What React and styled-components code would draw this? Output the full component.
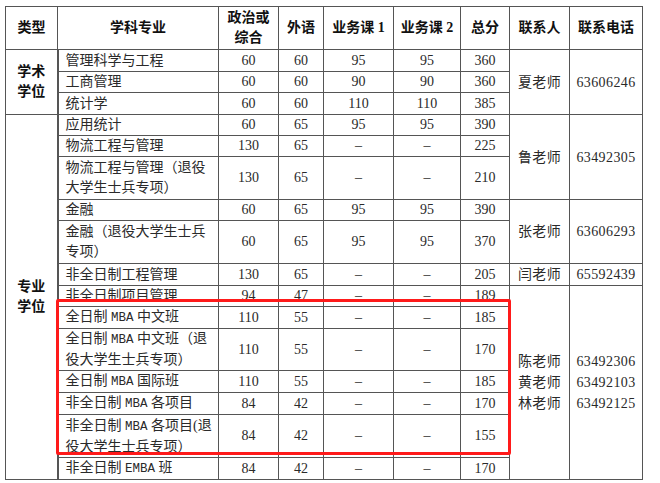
import styled, { createGlobalStyle } from "styled-components";

const GlobalStyle = createGlobalStyle`
  html, body {
    margin: 0;
    padding: 0;
    background: #ffffff;
  }
`;

const Page = styled.div`
  padding: 6px 0 0 5px;
  width: 660px;
  height: 483px;
  box-sizing: border-box;
`;

const Frame = styled.div`
  position: relative;
  width: 637px;
`;

const Table = styled.table`
  width: 637px;
  table-layout: fixed;
  border-collapse: collapse;
  font-family: "Liberation Serif", "Noto Sans CJK SC", serif;
  font-size: 14px;
  color: #2a2a2a;
`;

const HeadCell = styled.th`
  height: 42px;
  padding: 0;
  border: 1px solid #555;
  font-family: "Liberation Serif", "Noto Sans CJK SC", sans-serif;
  font-weight: 700;
  font-size: 14px;
  line-height: 20px;
  color: #111;
  text-align: center;
  vertical-align: middle;
  white-space: nowrap;
`;

const TypeCell = styled.td`
  padding: 0;
  border: 1px solid #555;
  border-right-width: 2px;
  font-family: "Liberation Serif", "Noto Sans CJK SC", sans-serif;
  font-weight: 700;
  line-height: 20px;
  color: #111;
  text-align: center;
  vertical-align: middle;
`;

const NameCell = styled.td`
  padding: 0 0 0 7px;
  border: 1px solid #555;
  line-height: 20px;
  text-align: left;
  vertical-align: middle;
  white-space: nowrap;
  overflow: hidden;
`;

const NumCell = styled.td`
  padding: 0;
  border: 1px solid #555;
  line-height: 20px;
  text-align: center;
  vertical-align: middle;
`;

const ContactCell = styled.td`
  padding: 0;
  border: 1px solid #555;
  line-height: 21px;
  letter-spacing: 0.4px;
  text-align: center;
  vertical-align: middle;
  white-space: nowrap;
`;

const Latin = styled.span`
  font-family: "Liberation Mono", monospace;
  font-size: 12.5px;
`;

const Highlight = styled.div`
  position: absolute;
  left: 51px;
  top: 293px;
  width: 455px;
  height: 156px;
  box-sizing: border-box;
  border: 3px solid #ff1a1a;
  border-radius: 2px;
  pointer-events: none;
`;

const colWidths = [52, 161, 60, 45, 70, 67, 49, 60, 73];

const headers = ["类型", "学科专业", "政治或\n综合", "外语", "业务课 1", "业务课 2", "总分", "联系人", "联系电话"];

const D = "–";

const rows = [
  { h: 22, name: "管理科学与工程", v: [60, 60, 95, 95, 360] },
  { h: 21, name: "工商管理", v: [60, 60, 90, 90, 360] },
  { h: 22, name: "统计学", v: [60, 60, 110, 110, 385] },
  { h: 21, name: "应用统计", v: [60, 65, 95, 95, 390] },
  { h: 21, name: "物流工程与管理", v: [130, 65, D, D, 225] },
  { h: 43, name: "物流工程与管理（退役\n大学生士兵专项）", v: [130, 65, D, D, 210] },
  { h: 21, name: "金融", v: [60, 65, 95, 95, 390] },
  { h: 43, name: "金融（退役大学生士兵\n专项）", v: [60, 65, 95, 95, 370] },
  { h: 21, name: "非全日制工程管理", v: [130, 65, D, D, 205] },
  { h: 21, name: "非全日制项目管理", v: [94, 47, D, D, 189] },
  { h: 22, name: "全日制 MBA 中文班", v: [110, 55, D, D, 185] },
  { h: 42, name: "全日制 MBA 中文班（退\n役大学生士兵专项）", v: [110, 55, D, D, 170] },
  { h: 22, name: "全日制 MBA 国际班", v: [110, 55, D, D, 185] },
  { h: 21, name: "非全日制 MBA 各项目", v: [84, 42, D, D, 170] },
  { h: 43, name: "非全日制 MBA 各项目(退\n役大学生士兵专项）", v: [84, 42, D, D, 155] },
  { h: 20, name: "非全日制 EMBA 班", v: [84, 42, D, D, 170] },
];

const types = {
  0: { span: 3, label: "学术\n学位" },
  3: { span: 13, label: "专业\n学位" },
};

const contacts = {
  0: { span: 3, name: "夏老师", phone: "63606246" },
  3: { span: 3, name: "鲁老师", phone: "63492305" },
  6: { span: 2, name: "张老师", phone: "63606293" },
  8: { span: 1, name: "闫老师", phone: "65592439" },
  9: { span: 7, name: "陈老师\n黄老师\n林老师", phone: "63492306\n63492103\n63492125" },
};

// split latin runs so "MBA" gets the narrow half-width look
const withLatin = (line) =>
  line.split(/([A-Za-z]+)/).map((part, k) =>
    /^[A-Za-z]+$/.test(part) ? <Latin key={k}>{part}</Latin> : part
  );

const Lines = ({ text }) =>
  text.split("\n").map((line, i) => (
    <span key={i}>
      {i > 0 && <br />}
      {withLatin(line)}
    </span>
  ));

export default function App() {
  return (
    <Page>
      <GlobalStyle />
      <Frame>
        <Table>
          <colgroup>
            {colWidths.map((w, i) => (
              <col key={i} style={{ width: w }} />
            ))}
          </colgroup>
          <thead>
            <tr>
              {headers.map((h) => (
                <HeadCell key={h}>
                  <Lines text={h} />
                </HeadCell>
              ))}
            </tr>
          </thead>
          <tbody>
            {rows.map((row, i) => (
              <tr key={i} style={{ height: row.h }}>
                {types[i] && (
                  <TypeCell rowSpan={types[i].span}>
                    <Lines text={types[i].label} />
                  </TypeCell>
                )}
                <NameCell>
                  <Lines text={row.name} />
                </NameCell>
                {row.v.map((v, j) => (
                  <NumCell key={j}>{v}</NumCell>
                ))}
                {contacts[i] && (
                  <>
                    <ContactCell rowSpan={contacts[i].span}>
                      <Lines text={contacts[i].name} />
                    </ContactCell>
                    <ContactCell rowSpan={contacts[i].span}>
                      <Lines text={contacts[i].phone} />
                    </ContactCell>
                  </>
                )}
              </tr>
            ))}
          </tbody>
        </Table>
        <Highlight />
      </Frame>
    </Page>
  );
}
